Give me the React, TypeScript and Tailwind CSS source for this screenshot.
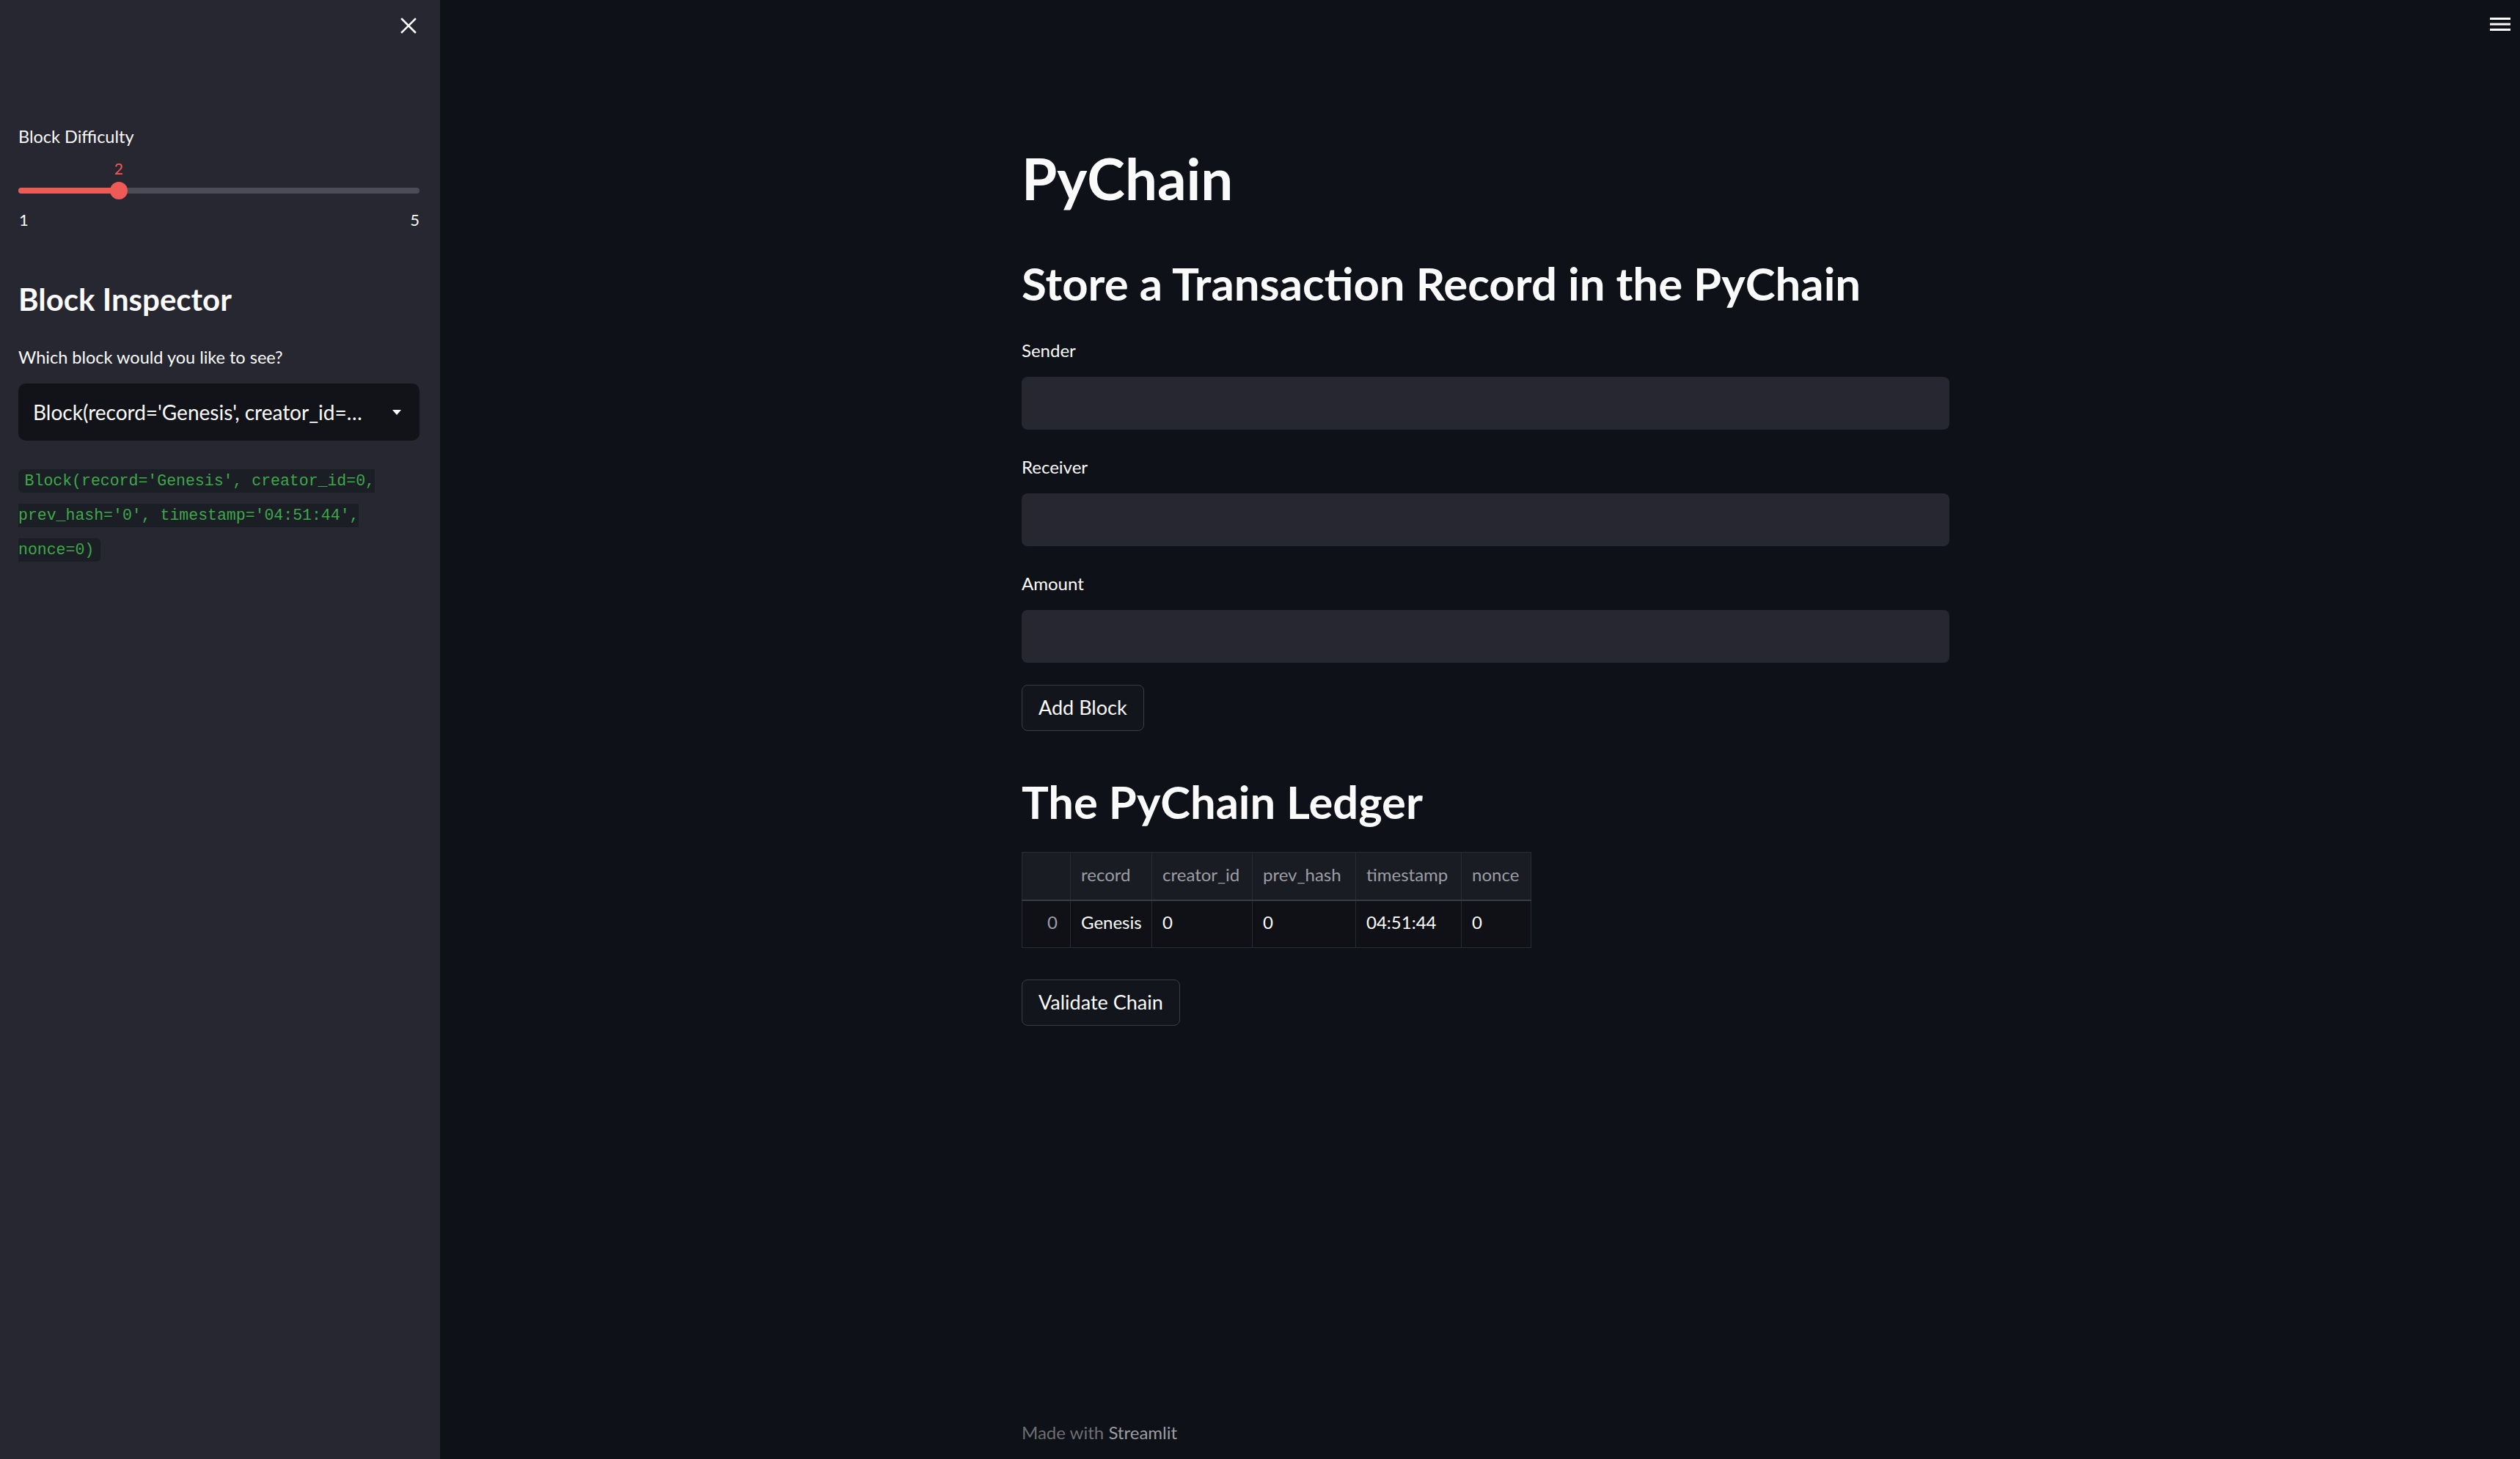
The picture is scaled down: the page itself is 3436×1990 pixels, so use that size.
import React from "react";

const ledger = [
  { record: "Genesis", creator_id: 0, prev_hash: "0", timestamp: "04:51:44", nonce: 0 },
];

const columns = [
  { key: "record", width: "w-[111px]" },
  { key: "creator_id", width: "w-[137px]" },
  { key: "prev_hash", width: "w-[141px]" },
  { key: "timestamp", width: "w-[144px]" },
  { key: "nonce", width: "w-[95px]" },
];

const DifficultySlider = ({ value, min, max }: { value: number; min: number; max: number }) => {
  const pct = ((value - min) / (max - min)) * 100;
  return (
    <div>
      <div className="h-[24px] text-[21px] leading-[24px] text-[#ee5a55]">
        <span className="inline-block -translate-x-1/2" style={{ marginLeft: `${pct}%` }}>
          {value}
        </span>
      </div>
      <div className="relative mt-[6px] flex h-[24px] items-center">
        <div className="h-[8px] w-full overflow-hidden rounded-full bg-[#4b4c57]">
          <div className="h-full bg-[#ee5a55]" style={{ width: `${pct}%` }} />
        </div>
        <div
          className="absolute top-0 h-[24px] w-[24px] -translate-x-1/2 rounded-full bg-[#ee5a55]"
          style={{ left: `${pct}%` }}
        />
      </div>
      <div className="mt-[16px] flex justify-between text-[22px] leading-[24px] text-[#fafafa]">
        <span className="pl-[1px]">{min}</span>
        <span>{max}</span>
      </div>
    </div>
  );
};

const Sidebar = () => (
  <aside className="flex h-[1990px] w-[600px] shrink-0 flex-col bg-[#262730] pl-[25px] pr-[28px]">
    {/* close button */}
    <div className="flex justify-end pt-[24px] pr-[4px]">
      <svg width="22" height="22" viewBox="0 0 22 22" fill="none" stroke="#fafafa" strokeWidth="2.6" strokeLinecap="square">
        <path d="M2 2 L20 20 M20 2 L2 20" />
      </svg>
    </div>

    <div className="mt-[124px] text-[23.5px] leading-[32px] text-[#fafafa]">Block Difficulty</div>
    <div className="mt-[16px]">
      <DifficultySlider value={2} min={1} max={5} />
    </div>

    <h2 className="mt-[72px] text-[42px] font-bold leading-[48px] text-[#fafafa]">Block Inspector</h2>
    <div className="mt-[39px] text-[23.5px] leading-[32px] text-[#fafafa]">Which block would you like to see?</div>

    {/* select box */}
    <div className="mt-[20px] flex h-[78px] items-center justify-between rounded-[10px] bg-[#121319] pl-[20px] pr-[25px]">
      <span className="whitespace-nowrap text-[28px] text-[#fafafa]">Block(record='Genesis', creator_id=…</span>
      <svg width="12" height="7" viewBox="0 0 12 7">
        <path d="M0 0 H12 L6 7 Z" fill="#fafafa" />
      </svg>
    </div>

    <p className="mt-[31px] font-['DejaVu_Sans_Mono',monospace] text-[21.5px] leading-[46px]">
      <code className="rounded-[6px] bg-[#1c1e26] px-[0.4em] py-[0.2em] text-[#3da849]">
        Block(record='Genesis', creator_id=0, prev_hash='0', timestamp='04:51:44', nonce=0)
      </code>
    </p>
  </aside>
);

const TextField = ({ label }: { label: string }) => (
  <div>
    <div className="mb-[20px] text-[24px] leading-[32px] text-[#fafafa]">{label}</div>
    <div className="h-[72px] w-full rounded-[8px] bg-[#262730]" />
  </div>
);

const Button = ({ children }: { children: React.ReactNode }) => (
  <button className="flex h-[63px] items-center rounded-[8px] border border-[#3b3d45] bg-[#12151c] px-[22px] text-[27px] text-[#fafafa]">
    {children}
  </button>
);

const LedgerTable = () => (
  <table className="w-[694px] table-fixed border-collapse border border-[#2a2c33] text-[24px] leading-[28px]">
    <thead>
      <tr className="h-[65px] bg-[#1a1c24]">
        <th className="w-[66px] border border-b-2 border-[#2a2c33] border-b-[#3a3c44]" />
        {columns.map((c) => (
          <th
            key={c.key}
            className={`${c.width} border border-b-2 border-[#2a2c33] border-b-[#3a3c44] px-[14px] pb-[3px] text-left font-normal text-[#9c9ea4]`}
          >
            {c.key}
          </th>
        ))}
      </tr>
    </thead>
    <tbody>
      {ledger.map((row, i) => (
        <tr key={i} className="h-[65px] bg-[#0f1116]">
          <td className="border border-[#2a2c33] pr-[17px] pb-[4px] text-right text-[#9c9ea4]">{i}</td>
          {columns.map((c) => (
            <td key={c.key} className="border border-[#2a2c33] px-[14px] pb-[4px] text-[#fafafa]">
              {String(row[c.key as keyof typeof row])}
            </td>
          ))}
        </tr>
      ))}
    </tbody>
  </table>
);

export default function App() {
  return (
    <div className="flex min-h-[1990px] bg-[#0e1117] font-['Lato',sans-serif]">
      <Sidebar />

      <main className="flex min-h-[1990px] flex-1 flex-col">
        {/* top toolbar */}
        <div className="flex h-[60px] justify-end pt-[24px] pr-[13px]">
          <svg width="28" height="18" viewBox="0 0 28 18" fill="#fafafa">
            <rect x="0" y="0" width="28" height="3" />
            <rect x="0" y="7.5" width="28" height="3" />
            <rect x="0" y="15" width="28" height="3" />
          </svg>
        </div>

        <div className="mx-auto box-content flex w-[1265px] flex-1 flex-col pl-[15px]">
          <h1 className="mt-[138px] text-[78px] font-bold leading-[90px] text-[#fafafa]">PyChain</h1>
          <h2 className="mt-[60px] text-[61.7px] font-bold leading-[76px] text-[#fafafa]">
            Store a Transaction Record in the PyChain
          </h2>

          <div className="mt-[38px] flex flex-col gap-[35px]">
            {["Sender", "Receiver", "Amount"].map((f) => (
              <TextField key={f} label={f} />
            ))}
          </div>

          <div className="mt-[30px]">
            <Button>Add Block</Button>
          </div>

          <h2 className="mt-[58px] text-[61.5px] font-bold leading-[76px] text-[#fafafa]">The PyChain Ledger</h2>

          <div className="mt-[31px]">
            <LedgerTable />
          </div>

          <div className="mt-[43px]">
            <Button>Validate Chain</Button>
          </div>

          <footer className="mt-auto pb-[21px] text-[24px] leading-[30px] text-[#6c6e72]">
            Made with <span className="text-[#9c9da1]">Streamlit</span>
          </footer>
        </div>
      </main>
    </div>
  );
}
